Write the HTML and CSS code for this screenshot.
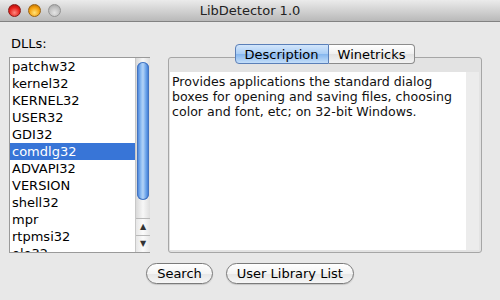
FILE: index.html
```html
<!DOCTYPE html>
<html lang="en">
<head>
    <meta charset="UTF-8">
    <title>LibDetector 1.0</title>
    <link rel="stylesheet" href="styles.css">
</head>
<body>

<div class="window">
    <!-- Title bar -->
    <div class="titlebar">
        <div class="lights">
            <span class="light red"></span>
            <span class="light yellow"></span>
            <span class="light off"></span>
        </div>
        <div class="title">LibDetector 1.0</div>
        <div></div>
    </div>

    <div class="main">
        <!-- DLL list -->
        <div class="left-col">
            <div class="label">DLLs:</div>
            <div class="listbox">
                <ul class="items">
                    <li>patchw32</li>
                    <li>kernel32</li>
                    <li>KERNEL32</li>
                    <li>USER32</li>
                    <li>GDI32</li>
                    <li class="selected">comdlg32</li>
                    <li>ADVAPI32</li>
                    <li>VERSION</li>
                    <li>shell32</li>
                    <li>mpr</li>
                    <li>rtpmsi32</li>
                    <li>ole32</li>
                </ul>
                <div class="vscroll">
                    <div class="track">
                        <div class="thumb"></div>
                    </div>
                    <div class="arrow">&#9650;</div>
                    <div class="arrow">&#9660;</div>
                </div>
            </div>
        </div>

        <!-- Tabbed pane -->
        <div class="right-col">
            <div class="tabs">
                <span class="tab active">Description</span>
                <span class="tab">Winetricks</span>
            </div>
            <div class="pane">
                <div class="textarea">Provides applications the standard dialog boxes for opening and saving files, choosing color and font, etc; on 32-bit Windows.</div>
                <div class="strip"></div>
            </div>
        </div>
    </div>

    <!-- Buttons -->
    <div class="buttons">
        <button type="button" class="pill">Search</button>
        <button type="button" class="pill">User Library List</button>
    </div>
</div>

</body>
</html>
```

FILE: styles.css
```css
body {
    margin: 0;
    font-family: 'DejaVu Sans', sans-serif;
    background-color: #e8e8e8;
    color: #000;
}

.window {
    width: 500px;
    height: 300px;
    overflow: hidden;
}

.titlebar {
    height: 21px;
    display: grid;
    grid-template-columns: 1fr auto 1fr;
    align-items: center;
    background: linear-gradient(#ebebeb, #b9b9b9);
    border-bottom: 1px solid #828282;
}

.lights {
    display: flex;
    gap: 7px;
    padding-left: 8px;
}

.light {
    width: 13px;
    height: 13px;
    border-radius: 50%;
    box-sizing: border-box;
}

.light.red {
    background: radial-gradient(circle at 50% 70%, #ff8a80 0%, #e5201b 55%, #9d0b07 100%);
    border: 1px solid #8a1a16;
}

.light.yellow {
    background: radial-gradient(circle at 50% 70%, #ffe27a 0%, #f4a00c 55%, #a86000 100%);
    border: 1px solid #9a6311;
}

.light.off {
    background: radial-gradient(circle at 50% 70%, #e4e4e4 0%, #bdbdbd 60%, #9a9a9a 100%);
    border: 1px solid #939393;
}

.title {
    font-size: 13px;
    color: #222;
}

.main {
    display: flex;
    align-items: flex-end;
    gap: 18px;
    padding: 14px 18px 0 9px;
}

.left-col {
    width: 141px;
}

.label {
    font-size: 13px;
    height: 21px;
    line-height: 16px;
    padding-left: 2px;
}

.listbox {
    display: flex;
    height: 196px;
    border: 1px solid #9a9a9a;
    border-right: none;
    background-color: #fff;
    box-sizing: border-box;
}

.items {
    flex: 1;
    list-style: none;
    margin: 0;
    padding: 0;
    overflow: hidden;
    font-size: 13px;
}

.items li {
    height: 17px;
    line-height: 17px;
    padding-left: 2px;
    white-space: nowrap;
}

.items li.selected {
    background-color: #3875d7;
    color: #fff;
}

.vscroll {
    width: 15px;
    display: flex;
    flex-direction: column;
    border-left: 1px solid #c8c8c8;
    box-sizing: border-box;
}

.track {
    flex: 1;
    padding: 4px 1px 0 1px;
    background: linear-gradient(90deg, #d9d9d9, #f7f7f7 50%, #dedede);
}

.thumb {
    height: 138px;
    border-radius: 7px;
    background: linear-gradient(90deg, #3a78d6, #94c1f3 35%, #b3d3f7 50%, #6aa3ea 75%, #3470cc);
    box-shadow: inset 0 0 0 1px #4474c0;
}

.arrow {
    height: 16px;
    font-size: 8px;
    line-height: 16px;
    text-align: center;
    color: #333;
    border-top: 1px solid #b8b8b8;
    background: linear-gradient(90deg, #e6e6e6, #fbfbfb 50%, #e6e6e6);
}

.right-col {
    width: 314px;
    display: flex;
    flex-direction: column;
}

.tabs {
    display: flex;
    justify-content: center;
    margin-bottom: -7px;
    position: relative;
    z-index: 1;
}

.tab {
    height: 20px;
    line-height: 19px;
    padding: 0 9px;
    font-size: 13px;
    box-sizing: border-box;
    border: 1px solid #8c8c8c;
    background: linear-gradient(#ffffff, #f0f0f0 50%, #e2e2e2 51%, #f3f3f3);
}

.tab.active {
    border-color: #5a7fb8;
    border-radius: 4px 0 0 4px;
    background: linear-gradient(#d3e6fb, #a9cdf5 50%, #85b6ee 51%, #c4def9);
}

.tab:last-child {
    border-left: none;
    border-radius: 0 4px 4px 0;
}

.pane {
    height: 196px;
    display: flex;
    padding: 14px 2px 2px 1px;
    border: 1px solid #a6a6a6;
    border-radius: 3px;
    background-color: #e3e3e3;
    box-sizing: border-box;
}

.textarea {
    flex: 1;
    background-color: #fff;
    font-size: 12.6px;
    line-height: 15px;
    color: #111;
    padding: 2px 4px 0 2px;
}

.strip {
    width: 13px;
    background-color: #ececec;
}

.buttons {
    display: flex;
    justify-content: center;
    gap: 13px;
    padding-top: 10px;
}

.pill {
    height: 21px;
    padding: 0 10px;
    font-family: 'DejaVu Sans', sans-serif;
    font-size: 13px;
    color: #000;
    border: 1px solid #7a7a7a;
    border-radius: 11px;
    background: linear-gradient(#ffffff, #f4f4f4 50%, #e6e6e6 51%, #f6f6f6);
    box-shadow: 0 1px 1px rgba(0, 0, 0, 0.15);
}
```
